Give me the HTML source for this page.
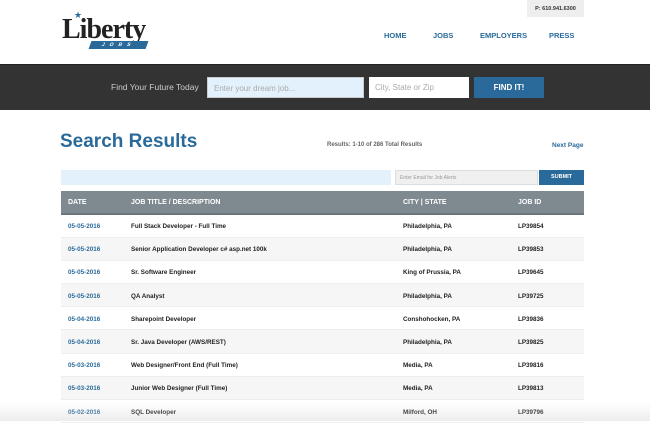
<!DOCTYPE html>
<html><head><style>
*{margin:0;padding:0;box-sizing:border-box}
body{width:650px;height:421px;overflow:hidden;background:#fff;font-family:"Liberation Sans",sans-serif;position:relative}
.abs{position:absolute}
.nav{top:31px;font-size:7.5px;font-weight:bold;color:#2a6a9a}
.bar{top:64px;left:0;width:650px;height:46px;background:#333;border-top:1px solid #222}
table{position:absolute;left:61px;top:191px;width:523px;border-collapse:collapse;font-size:6.3px;font-weight:bold;color:#222}
th{background:#7f8a90;color:#fff;text-align:left;height:23px;font-size:7px;padding-left:7px;border-bottom:2px solid #6b767c}
td{height:23.2px;padding-left:7px;border-bottom:1px solid #eee;padding-top:2px}
td:first-child{color:#2a6a9a}
tr:nth-child(odd) td{background:#f6f6f6}
</style></head><body>
<div class="abs" style="left:527px;top:0;width:57px;height:17px;background:#eee;font-size:5.5px;font-weight:bold;color:#333;text-align:center;line-height:18px">P: 610.941.6300</div>
<div class="abs" style="left:62px;top:14px;font-family:'Liberation Serif',serif;font-size:28px;color:#222;letter-spacing:-1px;font-weight:bold">Liberty</div>
<div class="abs" style="left:74px;top:10px;color:#2a6a9a;font-size:9px">★</div>
<div class="abs" style="left:90px;top:41px;width:57px;height:8px;background:#2a6a9a;transform:skewX(-20deg);color:#fff;font-size:5px;text-align:center;letter-spacing:5px;line-height:8px;font-weight:bold">JOBS</div>
<div class="abs nav" style="left:384px">HOME</div>
<div class="abs nav" style="left:433px">JOBS</div>
<div class="abs nav" style="left:480px">EMPLOYERS</div>
<div class="abs nav" style="left:549px">PRESS</div>
<div class="abs bar"></div>
<div class="abs" style="left:111px;top:82px;font-size:8.5px;color:#ccc">Find Your Future Today</div>
<div class="abs" style="left:207px;top:77px;width:157px;height:21px;background:#e2f1fb;border:1px solid #ccc;font-size:8px;color:#aaa;padding:6px 6px">Enter your dream job...</div>
<div class="abs" style="left:369px;top:77px;width:100px;height:21px;background:#fff;font-size:8px;color:#aaa;padding:6px 6px">City, State or Zip</div>
<div class="abs" style="left:474px;top:77px;width:70px;height:21px;background:#2a6a9a;color:#fff;font-size:8px;font-weight:bold;text-align:center;line-height:21px">FIND IT!</div>
<div class="abs" style="left:60px;top:131px;font-size:19px;font-weight:bold;color:#2a6a9a">Search Results</div>
<div class="abs" style="left:327px;top:142px;font-size:6px;color:#666;font-weight:bold">Results: 1-10 of 286 Total Results</div>
<div class="abs" style="left:552px;top:142px;font-size:6.5px;color:#2a6a9a;font-weight:bold">Next Page</div>
<div class="abs" style="left:61px;top:170px;width:330px;height:15px;background:#e2f1fb"></div>
<div class="abs" style="left:395px;top:170px;width:143px;height:15px;background:#f0f0f0;border:1px solid #ddd;font-size:5px;color:#999;padding:4px 4px">Enter Email for Job Alerts</div>
<div class="abs" style="left:539px;top:170px;width:45px;height:15px;background:#2a6a9a;color:#fff;font-size:5.5px;font-weight:bold;text-align:center;line-height:15px">SUBMIT</div>
<table>
<tr><th style="width:63px">DATE</th><th style="width:272px">JOB TITLE / DESCRIPTION</th><th style="width:115px">CITY | STATE</th><th>JOB ID</th></tr>
<tr><td>05-05-2016</td><td>Full Stack Developer - Full Time</td><td>Philadelphia, PA</td><td>LP39854</td></tr>
<tr><td>05-05-2016</td><td>Senior Application Developer c# asp.net 100k</td><td>Philadelphia, PA</td><td>LP39853</td></tr>
<tr><td>05-05-2016</td><td>Sr. Software Engineer</td><td>King of Prussia, PA</td><td>LP39645</td></tr>
<tr><td>05-05-2016</td><td>QA Analyst</td><td>Philadelphia, PA</td><td>LP39725</td></tr>
<tr><td>05-04-2016</td><td>Sharepoint Developer</td><td>Conshohocken, PA</td><td>LP39836</td></tr>
<tr><td>05-04-2016</td><td>Sr. Java Developer (AWS/REST)</td><td>Philadelphia, PA</td><td>LP39825</td></tr>
<tr><td>05-03-2016</td><td>Web Designer/Front End (Full Time)</td><td>Media, PA</td><td>LP39816</td></tr>
<tr><td>05-03-2016</td><td>Junior Web Designer (Full Time)</td><td>Media, PA</td><td>LP39813</td></tr>
<tr><td>05-02-2016</td><td>SQL Developer</td><td>Milford, OH</td><td>LP39796</td></tr>
</table>
<div class="abs" style="left:0;top:402px;width:650px;height:19px;background:linear-gradient(rgba(220,220,220,0),rgba(210,210,210,0.4))"></div>
</body></html>
